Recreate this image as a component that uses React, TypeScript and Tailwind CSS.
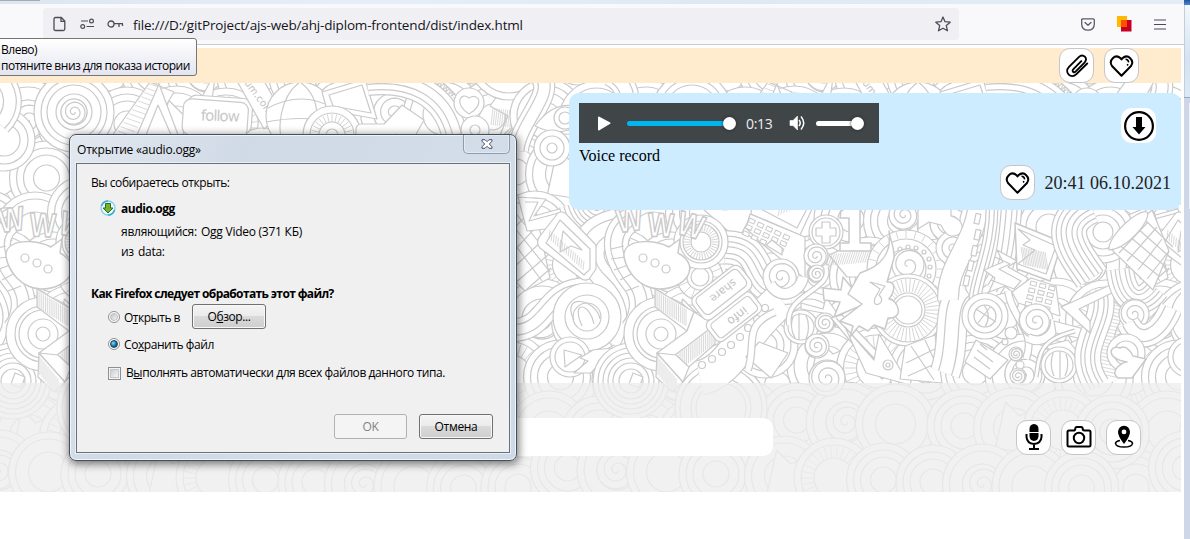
import type { ReactNode } from "react";

const G = "#cacaca";

type Pt = [number, number];

function Rings({ x, y, rs }: { x: number; y: number; rs: number[] }) {
  return (
    <>
      {rs.map((r) => (
        <circle key={r} cx={x} cy={y} r={r} />
      ))}
    </>
  );
}

function Rays({ x, y, a, b, n }: { x: number; y: number; a: number; b: number; n: number }) {
  const d = Array.from({ length: n }, (_, i) => {
    const t = (i / n) * Math.PI * 2;
    const c = Math.cos(t);
    const s = Math.sin(t);
    return `M${x + a * c} ${y + a * s}L${x + b * c} ${y + b * s}`;
  }).join("");
  return <path d={d} strokeWidth={0.8} />;
}

function Spiral({ x, y, r, turns = 2.4, start = 0 }: { x: number; y: number; r: number; turns?: number; start?: number }) {
  const n = 60;
  const d = Array.from({ length: n + 1 }, (_, i) => {
    const t = start + (i / n) * turns * Math.PI * 2;
    const q = 1 + (r - 1) * (i / n);
    return `${i ? "L" : "M"}${(x + q * Math.cos(t)).toFixed(1)} ${(y + q * Math.sin(t)).toFixed(1)}`;
  }).join("");
  return (
    <>
      <circle cx={x} cy={y} r={r} />
      <path d={d} fill="none" />
    </>
  );
}

/* A tube: nested strokes leave evenly spaced parallel lines along the path. */
function Tube({ d, w }: { d: string; w: number[] }) {
  return (
    <g fill="none">
      {w.map((v) => (
        <g key={v}>
          <path d={d} stroke={G} strokeWidth={v} />
          <path d={d} stroke="#fff" strokeWidth={v - 2.4} />
        </g>
      ))}
    </g>
  );
}

function Hatch({ from, to, v, n }: { from: Pt; to: Pt; v: Pt; n: number }) {
  const d = Array.from({ length: n }, (_, i) => {
    const k = i / (n - 1);
    const x = from[0] + (to[0] - from[0]) * k;
    const y = from[1] + (to[1] - from[1]) * k;
    return `M${x} ${y}l${v[0]} ${v[1]}`;
  }).join("");
  return <path d={d} strokeWidth={0.7} />;
}

function Keys({ x, y, cols, rows, transform }: { x: number; y: number; cols: number; rows: number; transform?: string }) {
  return (
    <g transform={transform}>
      {Array.from({ length: cols * rows }, (_, i) => (
        <rect key={i} x={x + (i % cols) * 9.5} y={y + Math.floor(i / cols) * 7} width={6} height={4} strokeWidth={1} />
      ))}
    </g>
  );
}

function Tile() {
  const base: ReactNode[] = [];
  for (let j = 0; j < 9; j++) {
    for (let i = 0; i < 12; i++) {
      const x = 518 + i * 51.5 + (j % 2) * 25 + ((i * 17 + j * 13) % 19) - 9;
      const y = 70 + j * 51 + ((i * 23 + j * 5) % 21) - 10;
      const kind = (i * 3 + j * 5) % 7;
      base.push(
        <g key={`${i}-${j}`}>
          <Rings x={x} y={y} rs={kind % 2 ? [37, 30, 23, 13] : [40, 33, 20]} />
          {kind === 2 && <Rays x={x} y={y} a={20} b={32} n={30} />}
          {kind === 4 && <Spiral x={x} y={y} r={20} />}
          {kind === 6 && <path d={`M${x - 18} ${y + 20}l10-46 14 14 24-10-22 46z`} />}
        </g>,
      );
    }
  }
  return (
    <g id="doodle" fill="#fff" stroke={G} strokeWidth={1.2} strokeLinejoin="round">
      {base}

      {/* upper band */}
      <Rings x={692} y={112} rs={[40, 33, 27, 18, 13]} />
      <Spiral x={692} y={112} r={13} />
      <Rings x={622} y={140} rs={[31, 24, 16]} />
      <Tube d="M610 74C630 84 634 108 618 124" w={[24, 14]} />
      <path d="M720 150L768 82L792 92L752 160Z" />
      <Hatch from={[768, 84]} to={[724, 148]} v={[14, 5]} n={16} />
      <path d="M742 165L777 84L798 140L834 70L822 160Z" />
      <path d="M758 150L776 105L797 153L818 105" fill="none" />
      <rect x="805" y="97" width="65" height="36" rx="9" transform="rotate(4 840 115)" />
      <rect x="801" y="101" width="65" height="36" rx="8" transform="rotate(4 840 115)" />
      <text x="819" y="121" fontSize="15" fontFamily="DejaVu Sans" fill="#c8c8c8" stroke="none" transform="rotate(2 835 115)" textLength="39">follow</text>
      <path d="M851 74L873 65L900 113L882 129Z" />
      <text x="0" y="0" transform="translate(862 83) rotate(53)" fontSize="10" fontFamily="DejaVu Sans" fill="#c2c2c2" stroke="none">um.com</text>
      <Rings x={918} y={116} rs={[34]} />
      <path d="M918 82C940 98 940 130 922 150M918 82C898 96 894 130 902 146M886 108Q920 90 951 108M884 122Q920 115 952 122" fill="none" />
      <path d="M940 92L983 79L995 119L945 110Z" />
      <path d="M947 95L980 85L989 113L951 106Z" />
      <Rings x={950} y={135} rs={[29, 22, 13, 6]} />
      <Rays x={950} y={135} a={13} b={21} n={28} />
      <rect x="974" y="124" width="40" height="22" rx="5" />
      <Tube d="M985 80C1030 75 1065 92 1075 134" w={[32, 22, 10]} />
      <path d="M1002 124L1020 105L1042 120L1028 145" />
      <text transform="translate(1051 82) rotate(38)" fontSize="9" fontFamily="DejaVu Sans" fill="#c2c2c2" stroke="none">/www.</text>
      <circle cx="1087" cy="103" r="15" />
      <path d="M1087 114C1071 104 1079 91 1087 98C1097 92 1103 105 1087 114Z" />
      <Rings x={1093} y={130} rs={[14, 5]} />
      <path d="M1108 106L1128 78L1156 78L1142 103L1156 103L1116 140L1126 116Z" />
      <Hatch from={[1111, 108]} to={[1134, 111]} v={[-2, 17]} n={12} />
      <Tube d="M539 75C558 92 520 122 518 151" w={[22, 13]} />
      <path d="M535 126Q559 93 591 113Q568 142 535 126Z" />
      <Rings x={565} y={118} rs={[11, 6]} />
      <Rings x={552} y={148} rs={[18, 12, 5]} />

      {/* left: net, tablet and tubes */}
      <path d="M510 201L535 208L550 278L525 291L500 266Z" />
      <path d="M510 222l40 50M510 206l39 49M510 238l32 43M534 207l-28 30M541 222l-34 36M545 238l-35 33M548 255l-33 28M551 268l-25 22" fill="none" />
      <path d="M518 197L546 199L534 216L570 206L585 239L562 231L558 256L546 229L527 231Z" />
      <path d="M525 202L538 202L529 221L566 211" fill="none" />
      <Tube d="M574 204C580 228 605 233 615 213" w={[31, 22, 13, 5]} />
      <path d="M630 224C582 225 578 261 602 282C620 299 626 320 613 344" fill="none" stroke={G} strokeWidth="34" />
      <path d="M630 224C582 225 578 261 602 282C620 299 626 320 613 344" fill="none" stroke="#fff" strokeWidth="31.6" />
      <Tube d="M630 224C582 225 578 261 602 282C620 299 626 320 613 344" w={[15]} />
      <Tube d="M633 218C605 235 617 262 635 284C646 300 641 321 631 331" w={[25, 13]} />
      <path d="M611 249l13-3M611 259l14-2M614 270l14-5M620 280l13-7M626 291l13-5" />
      <Tube d="M506 330C550 334 541 290 586 289" w={[24, 12]} />
      <Rings x={587} y={317} rs={[34, 22, 14]} />
      <path d="M574 320C560 293 596 298 600 319M582 326C570 299 590 303 594 324" fill="none" />
      <path d="M558 213Q563 210 568 216L596 245V269L589 279Q584 282 579 277L540 248Q535 242 540 236Z" />
      <path d="M560 220L590 249V269L584 275L546 243Z" />
      <path d="M563 231L582 250L571 246L560 252Z" />
      <Hatch from={[549, 239]} to={[583, 270]} v={[1, -9]} n={17} />
      <Rings x={570} y={357} rs={[20, 15]} />
      <path d="M564 350L582 355L565 367Z" />
      <path d="M593 350L613 348L591 373L574 373L588 361L580 358Z" />
      <Rings x={631} y={381} rs={[38, 33, 28, 23, 18, 12]} />
      <path d="M633 373l10 4-4 11-10-4z" />

      {/* keyboard, lens, speech bubble */}
      <path d="M726 210L758 203L738 240L702 208Z" />
      <path d="M752 205L819 194L800 235L751 214Z" />
      <path d="M757 207L812 199L797 228Z" />
      <Hatch from={[778, 216]} to={[812, 200]} v={[3, -14]} n={13} />
      <Tube d="M724 250C765 248 742 296 790 290" w={[40, 29, 18, 8]} />
      <path d="M750 214L805 237V279L760 242L746 228Z" />
      <Keys x={750} y={218} cols={5} rows={3} transform="rotate(25 750 218)" />
      <path d="M772 240l10 8v7l-16-10z" />
      <Rings x={700} y={277} rs={[23, 13, 9]} />
      <Rays x={700} y={277} a={13} b={23} n={16} />
      <Rings x={701} y={242} rs={[27, 21, 18, 10]} />
      <Rays x={701} y={242} a={11} b={18} n={34} />
      <g fontSize="34" fontWeight="bold" fontFamily="Liberation Sans" strokeWidth="1.6">
        <text transform="translate(618 233) rotate(-8) scale(.82 1)">W</text>
        <text transform="translate(647 236) rotate(3) scale(.82 1)">W</text>
        <text transform="translate(675 233) rotate(16) scale(.82 1)">W</text>
      </g>
      <path d="M624 257C622 238 655 239 669 247L680 239L678 253C702 266 686 289 659 289C639 288 627 272 624 257Z" strokeWidth="1.5" />
      <Rings x={643} y={258} rs={[4]} />
      <Rings x={655} y={263} rs={[4]} />
      <Rings x={666} y={269} rs={[4]} />

      {/* signal arcs and folded chevron */}
      <Rings x={661} y={334} rs={[37, 28, 24, 15, 7]} />
      <path d="M655 290L715 325V339L657 355V376L683 393L714 351L703 339L687 338L655 307Z" stroke="none" />
      <path d="M655 289L694 312L687 331L655 307Z" />
      <Hatch from={[656, 291]} to={[686, 309]} v={[0, 17]} n={17} />
      <path d="M694 312L715 325L676 356L657 353L687 331Z" />
      <path d="M715 325V344L683 372L675 355Z" />
      <Hatch from={[679, 353]} to={[713, 328]} v={[0, 17]} n={19} />
      <path d="M657 353L683 382L672 392L656 377Z" />
      <Hatch from={[658, 357]} to={[676, 378]} v={[0, 18]} n={10} />
      <path d="M676 355L689 367L683 382L657 353Z" />

      <Rings x={721} y={408} rs={[46, 41, 30, 25]} />
      <Rings x={765} y={345} rs={[33, 26, 19, 12]} />
      <Tube d="M781 300C740 334 732 371 700 378" w={[36]} />
      {([[765, 308], [757, 319], [748, 328], [740, 337], [731, 345], [722, 352], [712, 359], [702, 365]] as Pt[]).map(([x, y]) => (
        <circle key={x} cx={x} cy={y} r="3.5" />
      ))}
      <path d="M746 357L759 342L788 353L771 378Z" />
      <Tube d="M775 312C742 326 757 342 748 370" w={[8]} />
      <g transform="rotate(-38 735 314)">
        <rect x="704" y="303" width="57" height="25" rx="6" />
        <rect x="708" y="307" width="49" height="18" rx="4" />
        <text x="-747" y="-313" transform="rotate(180)" fontSize="12" fontFamily="DejaVu Sans" fill="#c2c2c2" stroke="none">info</text>
      </g>
      <g transform="rotate(-38 722 292)">
        <rect x="691" y="278" width="61" height="29" rx="7" />
        <rect x="695" y="281" width="53" height="21" rx="5" />
        <text x="-739" y="-288" transform="rotate(180)" fontSize="11" fontFamily="DejaVu Sans" fill="#c2c2c2" stroke="none">share</text>
      </g>
      <Spiral x={781} y={277} r={18} />
      <Tube d="M770 284C781 302 801 292 803 277" w={[12]} />

      {/* plus, numeral, arrows */}
      <Rings x={826} y={232} rs={[17, 14]} />
      <path d="M822 222h8v6h6v8h-6v7h-8v-7h-6v-8h6z" />
      <path d="M829 255Q858 240 896 249L885 277L847 277Z" />
      <Hatch from={[830, 254]} to={[887, 249]} v={[-4, 12]} n={26} />
      <path d="M841 211L846 208H860V243H871V251H840V243H849V218H840Z" strokeWidth="1.5" />
      <Spiral x={816} y={256} r={12} />
      <Spiral x={817} y={274} r={9} start={2} />
      <path d="M801 303L823 309L826 297L839 316L820 321L823 313L801 309Z" />
      <path d="M823 288L841 290L843 277L865 304L834 317L840 302L824 300Z" strokeWidth="1.5" />
      <Rings x={801} y={327} rs={[17, 13]} />
      <path d="M793 317Q789 327 795 338M799 313V340M806 315Q811 327 806 339" fill="none" />
      <Tube d="M826 268C833 290 784 294 789 325" w={[6]} />
      <Spiral x={825} y={323} r={10} />
      <Spiral x={817} y={346} r={12} start={1} />
      <Spiral x={827} y={378} r={18} start={3} />
      <path d="M831 318L842 315L896 371L882 379Z" />
      <path d="M836 318L886 371" />
      <path d="M845 327L874 360L879 334L906 379L909 337L919 351L910 385L866 373Z" />
      <Rings x={888} y={365} rs={[5, 2]} />

      {/* splash, feather, sunburst */}
      <Rings x={906} y={269} rs={[39, 30, 20]} />
      <Rays x={906} y={269} a={31} b={38} n={24} />
      {([[900, 249], [908, 247], [916, 248], [924, 252], [929, 259], [930, 267], [929, 276]] as Pt[]).map(([x, y]) => (
        <circle key={`${x}${y}`} cx={x} cy={y} r="2" />
      ))}
      <Spiral x={908} y={265} r={16} turns={1.6} start={2} />
      <Rings x={908} y={310} rs={[36, 32, 17, 14]} />
      <Rays x={908} y={310} a={18} b={31} n={42} />
      <Rings x={953} y={248} rs={[17, 11, 4]} />
      <path d="M889 231C892 253 882 266 860 273L848 294L862 304L840 321L853 326L850 337L859 326L868 331L874 325L885 329L888 318C905 319 898 300 889 299C897 288 894 281 887 282L894 258C895 247 890 241 889 231Z" strokeWidth="1.5" />
      <path d="M870 282L885 286L879 295C888 303 871 310 875 298L880 289Z" />
      <Spiral x={904} y={215} r={15} />
      <path d="M926 201H951V216Q966 221 961 233Q948 242 941 225L929 222L918 229V211Z" />
      <path d="M905 346L935 335L942 383L900 379Z" />
      <path d="M911 346l23 34M925 340l13 28M906 363l31-15M908 376l31-14" />

      {/* winding road */}
      <Tube d="M965 290C945 305 957 341 945 373" w={[31, 15]} />
      <Tube d="M980 192C978 245 947 260 948 300" w={[22]} />
      {([[979, 214], [979, 230], [976, 246], [972, 261], [968, 276]] as Pt[]).map(([x, y]) => (
        <rect key={y} x={x - 3} y={y} width="5" height="10" transform={`rotate(12 ${x} ${y})`} />
      ))}
      <Tube d="M1010 198C1007 245 1003 270 990 287" w={[26, 17, 7]} />
      <Tube d="M992 199C994 255 971 281 975 315" w={[13, 6]} />
      <Rings x={985} y={316} rs={[23, 17, 11]} />
      <path d="M976 309l20 13M991 306l-13 17M984 305q8 10 1 22" />
      <path d="M997 250L1017 261L1008 267L1028 278L1019 298L1005 286L989 292L995 278L984 270L1003 262Z" />
      <path d="M995 257L1010 264L999 269L1021 281L1014 289L991 280" fill="none" />
      <path d="M976 340L1008 360L990 379L965 362Z" />
      <path d="M980 344l7 6M977 350l16 12M974 357l16 12M987 344l5 4" />
      <Tube d="M1008 291C1012 320 1037 330 1026 359" w={[8]} />
      <Rings x={1011} y={333} rs={[6]} />
      <Rings x={1005} y={342} rs={[3]} />
      <Rings x={1020} y={365} rs={[4]} />
      <Spiral x={1016} y={354} r={7} />
      <Spiral x={1018} y={376} r={8} />

      {/* laptop */}
      <path d="M1015 223L1062 242L1050 281L1017 269Z" strokeWidth="1.5" />
      <path d="M1018 229L1056 246L1046 274L1018 264L1035 250L1023 245L1030 240Z" />
      <Hatch from={[1024, 265]} to={[1048, 270]} v={[-3, -18]} n={15} />
      <path d="M1031 278L1056 286L1060 316L1018 303L1012 292Z" />
      <Keys x={1031} y={281} cols={3} rows={4} transform="rotate(14 1031 281)" />
      <Spiral x={1036} y={321} r={17} start={1} />
      <Tube d="M1028 338C1043 345 1056 334 1055 319" w={[10]} />
      <path d="M1054 321L1084 329L1078 338L1056 333ZM1045 346L1068 340L1080 355L1055 354Z" />
      <Rings x={1059} y={365} rs={[18, 14]} />
      <path d="M1053 353Q1049 365 1054 376M1060 351V378M1066 354Q1070 365 1065 376" fill="none" />
      <Tube d="M1075 331C1034 341 1040 360 1036 377" w={[5]} />

      {/* right tubes, chevron, basket and heart */}
      <Rings x={1103} y={232} rs={[31, 24, 17, 10]} />
      <Tube d="M1091 206C1047 225 1081 261 1092 278" w={[36, 27, 17, 7]} />
      <Tube d="M1111 313Q1092 346 1110 383" w={[25]} />
      <Hatch from={[1102, 299]} to={[1101, 374]} v={[19, 4]} n={22} />
      <Tube d="M1099 290C1111 325 1070 345 1097 386" w={[27, 15, 7]} />
      <path d="M1061 307L1117 282L1118 290L1079 309L1090 321V333Z" />
      <Tube d="M1122 269C1125 297 1139 307 1154 287" w={[33, 24, 15, 7]} />
      <path d="M1110 248L1152 210L1169 251L1153 290Z" />
      <path d="M1119 245l40 31M1129 236l37 31M1137 228l34 30M1144 219l29 28M1119 253l29-31M1127 261l30-34M1138 270l24-31M1147 279l22-28" />
      <path d="M1109 250C1107 236 1139 208 1147 212C1152 220 1127 249 1109 250Z" />
      <Spiral x={1134} y={314} r={15} start={3} />
      <Tube d="M1128 323C1140 347 1160 334 1171 308" w={[24, 13]} />
      <Rings x={1126} y={353} rs={[19, 12]} />
      <path d="M1118 378C1108 371 1124 361 1127 362C1105 359 1109 344 1120 348C1127 344 1132 354 1133 356L1146 359L1132 378Z" strokeWidth="1.5" />
    </g>
  );
}

function Doodles() {
  return (
    <svg className="absolute inset-0 h-[409px] w-[1181px]" viewBox="0 83 1181 409">
      <defs>
        <Tile />
      </defs>
      <rect y="83" width="1181" height="409" fill="#fff" />
      <use href="#doodle" x="-618" />
      <use href="#doodle" x="618" />
      <use href="#doodle" />
    </svg>
  );
}

function Heart() {
  return (
    <svg viewBox="0 0 26 24" className="h-6 w-[26px]" fill="none" stroke="#000" strokeWidth="2" strokeLinejoin="round">
      <path d="M12.500 21.800L3 12C-.8 6.500 6-.8 11.600 4.300L12.500 5.500L13.400 4.300C19-.8 25.800 6.500 22 12Z" />
      <path d="M16.500 5.300c2 .1 3 1.200 3.200 3M19 10.200l-.8 1.300" strokeWidth="1.500" />
    </svg>
  );
}

function RoundButton({ children, plain }: { children: ReactNode; plain?: boolean }) {
  return (
    <button className={`flex h-[35px] w-[35px] shrink-0 items-center justify-center rounded-[11px] bg-white ${plain ? "" : "border border-[#c6c6c6]"}`}>
      {children}
    </button>
  );
}

function Toolbar() {
  return (
    <header className="flex h-[41px] shrink-0 items-center border-b border-[#cccccc] bg-[#f9f9fb] pl-[43px]">
      <div className="flex h-8 w-[916px] items-center rounded bg-[#f0f0f4] pl-2.5 text-[#4d4c58]">
        <svg viewBox="0 0 13 16" className="h-4 w-[13px]" fill="none" stroke="currentColor" strokeWidth="1.3">
          <path d="M2.5 1.5h5.8l3.5 3.5v8q0 1.5-1.5 1.5h-7.8Q1 14.500 1 13V3Q1 1.500 2.500 1.500zM8 1.500V5.300h3.800" />
        </svg>
        <svg viewBox="0 0 15 12" className="ml-3.5 h-3 w-[15px]" fill="none" stroke="currentColor" strokeWidth="1.2">
          <circle cx="11.500" cy="3" r="1.900" />
          <circle cx="2.700" cy="8.500" r="1.900" />
          <path d="M1 3h7M6.500 8.500H14" />
        </svg>
        <svg viewBox="0 0 17 10" className="ml-3 h-2.5 w-[17px]" fill="none" stroke="currentColor" strokeWidth="1.3">
          <circle cx="4" cy="5" r="3" />
          <path d="M7 4.600h9M12 5v3M15.500 5v2" />
        </svg>
        <span className="ml-[9px] flex-1 whitespace-nowrap pt-[2px] font-['Open_Sans',sans-serif] text-[13.500px] tracking-[-0.16px] text-[#15141a]">
          file:///D:/gitProject/ajs-web/ahj-diplom-frontend/dist/index.html
        </span>
        <svg viewBox="0 0 16 16" className="mr-2 h-4 w-4" fill="none" stroke="currentColor" strokeWidth="1.300" strokeLinejoin="round">
          <path d="M8 1l2 4.700 5.200.5-3.900 3.400 1.200 5.200L8 12.200l-4.500 2.600 1.200-5.200L.8 6.200 6 5.700z" />
        </svg>
      </div>
      <svg viewBox="0 0 14 13" className="ml-[122px] h-[13px] w-3.5" fill="none" stroke="#5b5b66" strokeWidth="1.300" strokeLinecap="round" strokeLinejoin="round">
        <path d="M1.800.8h10.400q1.100 0 1.100 1.100v4q0 6-6.300 6.300Q.7 11.900.7 5.900v-4Q.7.8 1.800.8zM4 4.500l3 2.800 3-2.800" />
      </svg>
      <svg viewBox="0 0 16 16" className="ml-[21px] h-4 w-4">
        <path d="M1 0h10v11H1z" fill="#ffb900" />
        <path d="M5 4h10.500v11.500H5z" fill="#c50022" />
        <path d="M5 4h6v7H5z" fill="#ff5000" />
      </svg>
      <svg viewBox="0 0 12 11" className="ml-[22px] h-[11px] w-3" stroke="#4b4b56" strokeWidth="1.200">
        <path d="M0 1h12M0 5.500h12M0 10h12" />
      </svg>
    </header>
  );
}

function AudioPlayer() {
  return (
    <div className="flex h-10 w-[300px] items-center bg-[#404548] pl-[18px] text-white">
      <svg viewBox="0 0 14 15" className="h-[15px] w-3.5" fill="#fff">
        <path d="M1 1.500Q1 0 2.400.7l10.800 5.900q.8.6 0 1.200L2.400 14.200Q1 14.800 1 13.500z" />
      </svg>
      <div className="ml-4 flex w-[109px] items-center">
        <div className="h-[5px] flex-1 rounded-l-full bg-[#00b6f0]" />
        <div className="-ml-1 h-[13px] w-[13px] rounded-full bg-white shadow-[0_0_3px_#222]" />
      </div>
      <span className="ml-[10px] w-7 whitespace-nowrap pt-px font-['Open_Sans',sans-serif] text-[14px] tracking-[-0.3px] text-[#eeeeee]">0:13</span>
      <svg viewBox="0 0 17 16" className="ml-[15px] h-4 w-[17px]" fill="none" stroke="#fff" strokeWidth="1.500">
        <path d="M1 5.500h3L8.500 1v14L4 10.500H1z" fill="#fff" strokeWidth=".6" strokeLinejoin="round" />
        <path d="M10 5q2.500 3 0 6" />
        <path d="M12 1.500q5.500 6.500 0 13" />
      </svg>
      <div className="ml-[10px] flex w-12 items-center">
        <div className="h-[5px] flex-1 rounded-l-full bg-white" />
        <div className="-ml-1 h-[13px] w-[13px] rounded-full bg-white shadow-[0_0_3px_#222]" />
      </div>
    </div>
  );
}

function Message() {
  return (
    <article className="flex h-[117px] w-[612px] flex-col rounded-[10px] bg-[#ceecff] pl-2.5 pr-[10px] pt-2.5 font-['Liberation_Serif',serif] text-black">
      <div className="flex h-[62px] justify-between">
        <div>
          <AudioPlayer />
          <p className="mt-[3px] text-base leading-5">Voice record</p>
        </div>
        <div className="mr-[15px] mt-[5px]">
          <RoundButton plain>
            <svg viewBox="0 0 32 32" className="h-8 w-8">
              <circle cx="16" cy="16" r="13.900" fill="#fff" stroke="#000" strokeWidth="2.200" />
              <path d="M13 7h6V17h3.500L16 24.500 9.500 17H13z" />
            </svg>
          </RoundButton>
        </div>
      </div>
      <div className="flex items-center justify-end gap-[9px]">
        <RoundButton><Heart /></RoundButton>
        <time className="whitespace-nowrap pt-px text-[18px] text-[#222]">20:41 06.10.2021</time>
      </div>
    </article>
  );
}

function Footer() {
  return (
    <footer className="flex h-[109px] items-center justify-between bg-[#eeeeee]/80 pb-px pl-[100px] pr-[40px]">
      <div className="h-[38px] w-[673px] rounded-[10px] bg-white" />
      <div className="flex gap-2.5">
        <RoundButton>
          <svg viewBox="0 0 20 28" className="h-7 w-5">
            <path d="M5.500 9V6q0-4.500 4.500-5Q14.500 1.500 14.500 6v3zM5.500 10h9v3.500q-.5 4-4.500 4.500-4-.5-4.500-4.500z" />
            <path d="M2.500 11v3Q3 20.500 10 21q7-.5 7.500-7v-3M10 21v4.500M5 26h10" fill="none" stroke="#000" strokeWidth="2" />
          </svg>
        </RoundButton>
        <RoundButton>
          <svg viewBox="0 0 26 24" className="h-6 w-[26px]" fill="none" stroke="#000" strokeWidth="2" strokeLinejoin="round">
            <path d="M3 5.500h4.500Q9.300 5.500 9.300 3.700T11 2h4q1.700 0 1.700 1.700t1.800 1.800H23q1.500 0 1.500 1.500v13Q24.500 21.500 23 21.500H3Q1.500 21.500 1.500 20V7Q1.500 5.500 3 5.500z" />
            <circle cx="13" cy="13" r="5.200" />
          </svg>
        </RoundButton>
        <RoundButton>
          <svg viewBox="0 0 20 24" className="h-6 w-5">
            <path d="M6 15.500q-4.500.8-4.500 3Q2 22 10 22t8.500-3.500q0-2.200-4.500-3" fill="none" stroke="#000" strokeWidth="1.600" />
            <path d="M10 19Q4 11.500 4 7q.5-6 6-6.300Q15.500 1 16 7q0 4.500-6 12zM10 4.500a2.400 2.400 0 100 4.800 2.400 2.400 0 000-4.800" fillRule="evenodd" />
          </svg>
        </RoundButton>
      </div>
    </footer>
  );
}

function DialogButton({ children, disabled }: { children: ReactNode; disabled?: boolean }) {
  return (
    <button
      className={`flex h-[25px] items-center justify-center rounded-[3px] border ${
        disabled
          ? "border-[#adb2b5] bg-[#f4f4f4] text-[#838383]"
          : "border-[#707070] bg-[linear-gradient(#f3f3f3,#ebebeb_49%,#dadada_50%,#cecece)] text-black shadow-[inset_0_0_0_1px_#f8f8f8]"
      }`}
    >
      {children}
    </button>
  );
}

function Radio({ on }: { on?: boolean }) {
  return (
    <span className="flex h-3 w-3 items-center justify-center rounded-full border border-[#8e8f8f] bg-white">
      <span className={`h-2 w-2 rounded-full border ${on ? "border-[#16405e] bg-[radial-gradient(circle_at_35%_35%,#7ae0ff,#15638f_60%)]" : "border-[#b8bcc0] bg-[linear-gradient(135deg,#bfc4ca,#f6f6f6)]"}`} />
    </span>
  );
}

function SaveDialog() {
  return (
    <section className="absolute left-[69px] top-[134px] flex h-[327px] w-[448px] flex-col rounded-[7px] border border-[#474f59] bg-[linear-gradient(115deg,#e2e8f0,#d0dae6_30%,#d3ddea_70%,#cdd9e6)] px-1.5 pb-[7px] font-['Open_Sans',sans-serif] text-[12px] text-black shadow-[inset_0_0_0_1px_#eef4fa,1px_2px_9px_1px_#00000085]">
      <div className="flex h-7 shrink-0 justify-between pl-[1px]">
        <h2 className="whitespace-nowrap pt-[6px] leading-[18px] tracking-[-0.2px]">Открытие «audio.ogg»</h2>
        <button className="flex h-[19px] w-[47px] items-center justify-center rounded-b-[5px] border border-t-0 border-[#8e9bac] shadow-[inset_0_0_0_1px_#e2eaf3]">
          <svg viewBox="0 0 12 10" className="h-2.5 w-3">
            <path d="M1 .7h3l2 2 2-2h3v1.500L8.300 5 11 7.800v1.500H8l-2-2-2 2H1V7.800L3.700 5 1 2.200z" fill="#fff" stroke="#4b5268" />
          </svg>
        </button>
      </div>
      <div className="flex min-h-0 flex-1 flex-col whitespace-nowrap border border-[#687078] bg-[#f0f0f0] pl-3.5 pr-4 pt-2 shadow-[0_0_0_1px_#e9f0f7] tracking-[-0.43px]">
        <p className="h-5 leading-[21px]">Вы собираетесь открыть:</p>
        <div className="mt-1.5 flex h-5 items-center pl-[9px] font-bold">
          <svg viewBox="0 0 16 16" className="mr-[5px] h-4 w-4">
            <circle cx="8" cy="8" r="7" fill="#edf9fe" stroke="#80cff0" strokeWidth="1.300" />
            <path d="M1.500 6A7 7 0 018 1M14.500 10A7 7 0 018 15" fill="none" stroke="#35a9dc" strokeWidth="1.500" />
            <path d="M5.500 3.500h5V8H13l-5 5-5-5h2.500z" fill="#73b132" stroke="#356b12" />
          </svg>
          <span className="pt-px tracking-[-0.5px]">audio.ogg</span>
        </div>
        <div className="mt-[3px] flex h-5 gap-[5px] pl-[30px] leading-[22px] tracking-[-0.25px]">
          <span className="w-[75px]">являющийся:</span><span>Ogg Video (371 КБ)</span>
        </div>
        <div className="flex h-5 gap-[5px] pl-[30px] leading-[22px] tracking-[-0.3px]"><span className="w-3">из</span><span>data:</span></div>
        <p className="mt-[22px] h-5 font-bold leading-[21px] tracking-[-0.62px]">Как Firefox следует обработать этот файл?</p>
        <div className="mt-px flex h-[25px] items-center pl-[17px]">
          <Radio />
          <span className="ml-[4px] w-[68px] pt-[2px] tracking-[-0.5px]">О<u>т</u>крыть в</span>
          <div className="grid w-[74px]"><DialogButton><span>О<u>б</u>зор...</span></DialogButton></div>
        </div>
        <div className="mt-[5px] flex h-5 items-center pl-[17px]">
          <Radio on />
          <span className="ml-[4px] pt-px">Со<u>х</u>ранить файл</span>
        </div>
        <div className="mt-[9px] flex h-5 items-center pl-[17px]">
          <span className="flex h-[13px] w-[13px] items-center justify-center border border-[#8e8f8f] bg-[#f4f4f4]">
            <span className="h-[9px] w-[9px] border border-[#c4c8cc] bg-[linear-gradient(135deg,#cbcfd5,#f6f6f6)]" />
          </span>
          <span className="ml-[5px]">В<u>ы</u>полнять автоматически для всех файлов данного типа.</span>
        </div>
        <div className="mt-[31px] grid grid-cols-[73px_74px] justify-end gap-3 tracking-[-0.3px]">
          <DialogButton disabled>OK</DialogButton>
          <DialogButton>Отмена</DialogButton>
        </div>
      </div>
    </section>
  );
}

export default function App() {
  return (
    <div className="relative flex h-[539px] w-[1190px] overflow-hidden bg-white">
      <div className="flex w-[1184px] flex-col">
        <div className="flex h-1 shrink-0 bg-[linear-gradient(90deg,#dce6ef,#e6eff7_30%,#dce9f4_60%,#e4edf5)]">
          <div className="h-px w-10 bg-[#a9a9b2]" />
        </div>
        <Toolbar />
        <main className="mt-[3px] flex w-[1181px] flex-col">
          <div className="flex h-[35px] items-center justify-end gap-2.5 bg-[#ffebcd] pr-[42px]">
            <RoundButton>
              <svg viewBox="0 0 24 24" className="h-6 w-6" fill="none" stroke="#000" strokeWidth="1.900" strokeLinecap="round" strokeLinejoin="round">
                <path d="M16.300 7.200L8.200 15.300c-1.700 1.700.6 4 2.300 2.300l9-9c4.300-4.300-1.500-9.700-5.700-5.500L4 12.900c-5.200 5.500 2 12.600 7.400 7.200l10.800-10.600" />
              </svg>
            </RoundButton>
            <RoundButton><Heart /></RoundButton>
          </div>
          <div className="relative">
            <Doodles />
            <div className="relative">
              <div className="flex h-[300px] items-start justify-end pt-2.5"><Message /></div>
              <Footer />
            </div>
          </div>
        </main>
      </div>
      <aside className="flex w-1.5 flex-col bg-[#cdd7e7]">
        <div className="h-[5px] bg-[linear-gradient(#2257a0,#4a86c9)]" />
        <div className="h-[92px] border-l border-[#c2cede] bg-[linear-gradient(#f2f8fd,#d4e2f1_60%,#dce9f6)]" />
        <div className="h-px bg-[#98a6bb]" />
        <div className="mt-[5px] ml-[5px] h-[106px] bg-[#f0f4fa]" />
      </aside>
      <div className="absolute left-[-4px] top-[38px] flex h-[38px] w-[201px] flex-col justify-center whitespace-nowrap rounded-[3px] border border-[#767676] bg-[linear-gradient(#ffffff,#e4e5f0)] pl-1 pt-[2px] font-['Open_Sans',sans-serif] text-[12px] leading-4 tracking-[-0.48px] text-black">
        <span>Влево)</span>
        <span>потяните вниз для показа истории</span>
      </div>
      <SaveDialog />
    </div>
  );
}
